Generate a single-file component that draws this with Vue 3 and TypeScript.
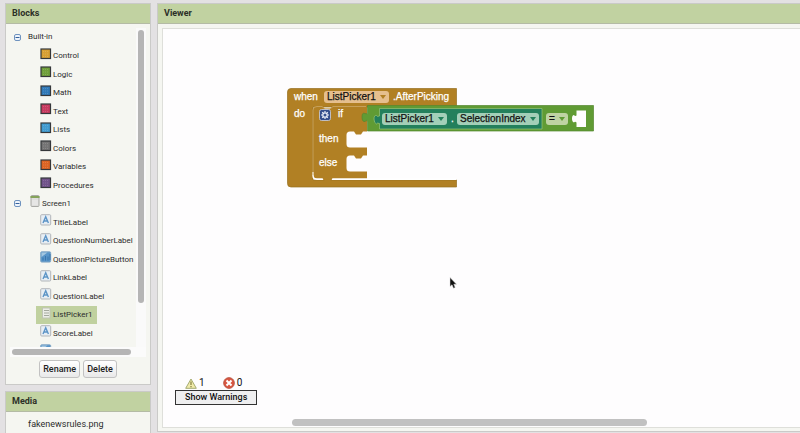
<script setup lang="ts">
import { ref } from 'vue'

type IconKind = 'none' | 'drawer' | 'screen' | 'label' | 'button' | 'list'

interface TreeRow {
  name: string
  level: 0 | 1
  icon: IconKind
  color?: string
}

const rows: TreeRow[] = [
  { name: 'Built-in', level: 0, icon: 'none' },
  { name: 'Control', level: 1, icon: 'drawer', color: '#d89f32' },
  { name: 'Logic', level: 1, icon: 'drawer', color: '#6f9f3a' },
  { name: 'Math', level: 1, icon: 'drawer', color: '#3079b8' },
  { name: 'Text', level: 1, icon: 'drawer', color: '#c73a60' },
  { name: 'Lists', level: 1, icon: 'drawer', color: '#409bd0' },
  { name: 'Colors', level: 1, icon: 'drawer', color: '#747474' },
  { name: 'Variables', level: 1, icon: 'drawer', color: '#dc6423' },
  { name: 'Procedures', level: 1, icon: 'drawer', color: '#70528a' },
  { name: 'Screen1', level: 0, icon: 'screen' },
  { name: 'TitleLabel', level: 1, icon: 'label' },
  { name: 'QuestionNumberLabel', level: 1, icon: 'label' },
  { name: 'QuestionPictureButton', level: 1, icon: 'button' },
  { name: 'LinkLabel', level: 1, icon: 'label' },
  { name: 'QuestionLabel', level: 1, icon: 'label' },
  { name: 'ListPicker1', level: 1, icon: 'list' },
  { name: 'ScoreLabel', level: 1, icon: 'label' },
  { name: '', level: 1, icon: 'button' },
]

const selected = ref('ListPicker1')
const warnings = ref(1)
const errors = ref(0)
</script>

<template>
  <div class="page">
    <div class="side">
      <section class="panel">
        <h2>Blocks</h2>
        <div class="tree-area">
          <div class="tree-view">
            <ul class="tree">
              <li v-for="(row, i) in rows" :key="i" :class="'level' + row.level">
                <button v-if="row.level === 0" class="toggle" :aria-label="'Collapse ' + row.name">
                  <svg width="7" height="7" viewBox="0 0 7 7">
                    <rect x=".5" y=".5" width="6" height="6" rx="1.5" fill="#eef4fb" stroke="#6f93bf" />
                    <path d="M1.5 3.5h4" stroke="#34619c" />
                  </svg>
                </button>
                <a href="#" :class="{ selected: row.name === selected }" @click.prevent="selected = row.name">
                  <svg v-if="row.icon === 'drawer'" width="12" height="12" viewBox="0 0 12 12">
                    <rect x="1" y="1" width="9.500" height="9.500" :fill="row.color" stroke="#34373a" stroke-width="1.2" />
                    <path d="M3 3.5h6M3 6h6M3 8.5h6" stroke="#fff" stroke-opacity=".15" stroke-dasharray="1 1" />
                  </svg>
                  <svg v-else-if="row.icon === 'screen'" width="10" height="12" viewBox="0 0 10 12">
                    <rect x="1" y=".5" width="8" height="11" rx="1" fill="#dededc" stroke="#a9aaa6" />
                    <path d="M.5 2h9" stroke="#84a35a" stroke-width="2" />
                    <path d="M3 5v5M5 5v5M7 5v5" stroke="#eee" />
                  </svg>
                  <svg v-else-if="row.icon === 'label'" width="12" height="12" viewBox="0 0 12 12">
                    <rect x=".7" y=".7" width="10" height="10.3" rx="1" fill="#e7eef4" stroke="#b2b6b9" />
                    <path d="M3 9 5.700 2.800 8.400 9M4.100 7h3.300" fill="none" stroke="#5c94c6" stroke-width="1.4" />
                  </svg>
                  <svg v-else-if="row.icon === 'button'" width="12" height="12" viewBox="0 0 12 12">
                    <rect x=".7" y=".8" width="10" height="10.3" rx="1" fill="#5794c8" stroke="#86a9c6" />
                    <path d="M1.5 1.5h6L1.5 6z" fill="#a3c6e0" />
                    <path d="M3 9.5v-3M5.5 9.5V5M8 9.5v-4M10 9V3" stroke="#3975ac" />
                  </svg>
                  <svg v-else-if="row.icon === 'list'" width="12" height="12" viewBox="0 0 12 12">
                    <rect x="2.500" y="1" width="7.500" height="10" fill="#eceee8" stroke="#bfc4b6" />
                    <path d="M4 3.5h5M4 6h5M4 8.5h5" stroke="#a4a99d" />
                  </svg>
                  <span>{{ row.name }}</span>
                </a>
              </li>
            </ul>
          </div>
          <div class="vbar"><i></i></div>
          <div class="hbar"><i></i></div>
        </div>
        <div class="actions">
          <button>Rename</button>
          <button>Delete</button>
        </div>
      </section>

      <section class="panel media">
        <h2>Media</h2>
        <a class="file" href="#">fakenewsrules.png</a>
      </section>
    </div>

    <section class="panel viewer">
      <h2>Viewer</h2>
      <div class="canvas">
        <div class="blocks">
          <svg width="310" height="102" viewBox="0 0 310 102">
            <path d="M4 .5H169.500V19H26V92H169.500V99H4Q.5 99 .5 95.500V4Q.5.5 4 .5Z" fill="#b18024" stroke="#96701f" stroke-width=".7" />
            <path d="M30 18H35L38 20.500H43L46 18H80V43.500H76L74 46.500H69L67 43.500H63Q59.500 43.500 59.500 47V56Q59.500 59.500 63 59.500H80V67.500H76L74 70.500H69L67 67.500H63Q59.500 67.500 59.500 71V80Q59.500 83.500 63 83.500H80V90.500H46L43 93H38L35 90.500H30Q26 90.500 26 87V22Q26 18 30 18Z" fill="#b18024" />
            <path d="M26 84V87.500Q26 91.200 30 91.200H36M45 91.200H169" fill="none" stroke="#fff" stroke-width="1.4" />
            <path d="M26 87V22Q26 18.500 30 18.500H35L38 21H43L46 18.500H79" fill="none" stroke="#cba868" stroke-width=".8" />
            <path d="M80.500 17.500H306.500V43H80.500V33Q79 32 78 33.500 75 34 75 29T78 25.500Q79 26 80.500 25.500Z" fill="#609b34" stroke="#55862f" stroke-width=".7" />
            <path d="M92.500 20.500H255V41H92.500V35.500Q90 34.500 89.500 36 87 35 87 31T89.500 27.500Q90 29 92.500 28Z" fill="#23805c" stroke="#98c478" stroke-width=".7" />
            <path d="M289.500 22.500H299V39H289.500V34.500Q288 33 287 34.500 285 34 285 30.500T287 27Q288 28.500 289.500 27.500Z" fill="#fefdfe" />
            <g>
              <rect x="32.500" y="21.500" width="11" height="11" rx="2" fill="#354f8d" stroke="#d2d3dd" stroke-width=".8" />
              <circle cx="38" cy="27" r="2.200" fill="none" stroke="#e9edf7" stroke-width="1.300" />
              <path d="M38 23v1.500M38 29.500V31M34 27h1.500M40.500 27H42M35.200 24.200l1 1M39.800 28.800l1 1M40.800 24.200l-1 1M36.200 28.800l-1 1" stroke="#e9edf7" stroke-width="1.200" />
            </g>
          </svg>
          <span class="word when">when</span>
          <span class="word event">.AfterPicking</span>
          <span class="word do">do</span>
          <span class="word if">if</span>
          <span class="word then">then</span>
          <span class="word else">else</span>
          <span class="word dot">.</span>
          <label class="field event-source"><select aria-label="Event component"><option>ListPicker1</option></select><b></b></label>
          <label class="field teal source"><select aria-label="Component"><option>ListPicker1</option></select><b></b></label>
          <label class="field teal property"><select aria-label="Property"><option>SelectionIndex</option></select><b></b></label>
          <label class="field green operator"><select aria-label="Operator"><option>=</option></select><b></b></label>
        </div>

        <svg class="pointer" width="8" height="12" viewBox="0 0 8 12">
          <path d="M1 .5V9.500L3 7.800 4.500 11.300 6.200 10.500 4.800 7.200H7.500Z" fill="#111" stroke="#ddd" stroke-width=".5" />
        </svg>

        <div class="status">
          <div class="counts">
            <svg width="12" height="11" viewBox="0 0 12 11">
              <path d="M6 1 11.300 10.300H.7Z" fill="#f0eaaa" stroke="#a4ab72" stroke-linejoin="round" />
              <path d="M6 3.500V7M6 8v1.300" stroke="#8b8748" stroke-width="1.300" />
            </svg>
            <span>{{ warnings }}</span>
            <svg class="bad" width="12" height="12" viewBox="0 0 12 12">
              <circle cx="6" cy="6" r="5.400" fill="#d85641" stroke="#b5503f" stroke-width=".8" />
              <path d="m3.500 3.500 5 5m0-5-5 5" stroke="#fff" stroke-width="2" />
            </svg>
            <span>{{ errors }}</span>
          </div>
          <button>Show Warnings</button>
        </div>
        <div class="canvas-bar"></div>
      </div>
    </section>
  </div>
</template>

<style>
body {
  background: #e3e1e3;
}
</style>

<style scoped>
* {
  box-sizing: border-box;
}
.page {
  display: flex;
  gap: 6px;
  height: 100vh;
  padding: 3px 0 0 5px;
  overflow: hidden;
  font: 9px/14px Roboto, "Liberation Sans", sans-serif;
  color: #2c2c2c;
}
.side {
  display: flex;
  flex-direction: column;
  flex: 0 0 146px;
  gap: 6px;
}
.panel {
  border: 1px solid #cacac8;
  background: #f5f6f1;
}
h2 {
  height: 20px;
  margin: 0;
  padding-left: 6px;
  border-bottom: 1px solid #b4bba5;
  background: #c1d2a1;
  font-size: 9px;
  line-height: 19px;
  font-weight: 700;
  color: #2c3027;
}
.tree-area {
  display: grid;
  grid-template-columns: 1fr 10px;
  grid-template-rows: 319px 10px;
  padding: 4px 4px 0;
}
.tree-view {
  overflow: hidden;
}
.tree {
  display: flex;
  flex-direction: column;
  height: 333px;
  margin: 0;
  padding: 0;
  list-style: none;
  font-size: 8px;
}
li {
  display: flex;
  flex: 1 1 0;
  align-items: center;
  min-height: 0;
}
.toggle {
  display: flex;
  width: 7px;
  height: 7px;
  margin: 0 7px 0 4px;
  padding: 0;
  border: 0;
  background: none;
}
li a {
  display: flex;
  align-items: center;
  height: 18px;
  color: inherit;
  text-decoration: none;
  white-space: nowrap;
}
li a svg {
  flex: none;
  margin: 0 1px 5px 0;
}
.level0 a svg {
  margin: 0 2px 5px;
}
.level1 a {
  margin-left: 26px;
  padding: 1px 4px 0;
}
li a.selected {
  background: #c0d19f;
}
.vbar {
  padding: 2px 2px 0;
  background: #fafafa;
}
.vbar i {
  display: block;
  width: 6px;
  height: 86%;
  border-radius: 3px;
  background: #b5b5b5;
}
.hbar {
  grid-column: 1 / 3;
  padding: 2px;
  background: #fbfbfb;
}
.hbar i {
  display: block;
  width: 90%;
  height: 6px;
  border-radius: 3px;
  background: #b5b5b5;
}
.actions {
  display: flex;
  justify-content: center;
  gap: 3px;
  padding: 3px 0 6px;
}
.actions button {
  height: 18px;
  padding: 0 3px;
  border: 1px solid #c2c2c2;
  border-radius: 3px;
  background: linear-gradient(#fff, #e9e9e9);
  font: 500 9px/14px Roboto, sans-serif;
  color: #222;
}
.media {
  flex: 1;
  border-bottom: 0;
}
.file {
  display: block;
  padding: 5px 22px;
  color: inherit;
  text-decoration: none;
}
.viewer {
  display: flex;
  flex: 1;
  flex-direction: column;
  min-width: 0;
  margin-bottom: 1px;
  border-right: 0;
}
.canvas {
  position: relative;
  flex: 1;
  margin: 4px 0 3px 4px;
  border: 1px solid #dedfda;
  border-right: 0;
  background: #fefdfe;
}
.blocks {
  position: absolute;
  left: 124px;
  top: 59px;
  width: 310px;
  height: 102px;
  font: 10px/12px "Liberation Sans", sans-serif;
  color: #fff;
}
.blocks > svg {
  display: block;
}
.word {
  position: absolute;
  -webkit-text-stroke: .25px #fff;
}
.when { left: 7px; top: 3px; }
.event { left: 106px; top: 3px; }
.do { left: 7px; top: 20px; }
.if { left: 51px; top: 20px; }
.then { left: 32px; top: 45px; }
.else { left: 32px; top: 69px; }
.dot { left: 164px; top: 25px; }
.field {
  position: absolute;
  height: 12px;
  border-radius: 3px;
  background: #e5bf8e;
  color: #b18024;
}
.field select {
  display: block;
  width: 100%;
  height: 12px;
  margin: 0;
  padding: 0 0 0 3px;
  border: 0;
  appearance: none;
  background: none;
  font: 10px/12px "Liberation Sans", sans-serif;
  color: #111;
  -webkit-text-stroke: .25px #111;
}
.field b {
  position: absolute;
  right: 3px;
  top: 4px;
  border: 3px solid transparent;
  border-top: 4px solid currentColor;
  border-bottom: 0;
  pointer-events: none;
}
.teal {
  background: #a3cfb8;
  color: #23805c;
}
.green {
  background: #bfd3a3;
  color: #609b34;
}
.event-source { left: 37px; top: 3px; width: 65px; }
.source { left: 95px; top: 25px; width: 65px; }
.property { left: 170px; top: 25px; width: 82px; }
.operator { left: 259px; top: 25px; width: 22px; }
.pointer {
  position: absolute;
  left: 286px;
  top: 248px;
}
.status {
  position: absolute;
  left: 12px;
  bottom: 22px;
}
.counts {
  display: flex;
  align-items: center;
  height: 14px;
  padding-left: 10px;
  gap: 2px;
  font-size: 10px;
  color: #111;
}
.counts .bad {
  margin-left: 16px;
}
.status button {
  display: block;
  height: 15px;
  margin: 0;
  padding: 0 9px;
  border: 1px solid #333;
  background: #efeff0;
  font: 500 9px/13px Roboto, sans-serif;
  color: #111;
}
.canvas-bar {
  position: absolute;
  left: 129px;
  right: 153px;
  bottom: 1px;
  height: 7px;
  border-radius: 4px;
  background: #c1c1c1;
}
</style>
